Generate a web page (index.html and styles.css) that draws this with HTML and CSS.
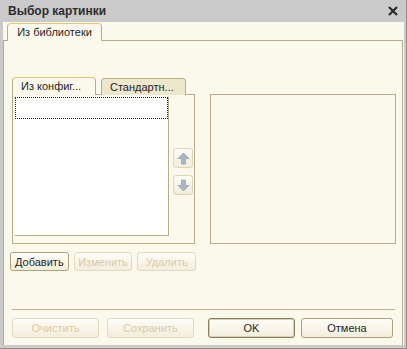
FILE: index.html
```html
<!DOCTYPE html>
<html lang="ru">
<head>
    <meta charset="UTF-8">
    <title>Выбор картинки</title>
    <link rel="stylesheet" href="styles.css">
</head>
<body>
    <div class="dialog">
        <div class="titlebar">
            <span class="title">Выбор картинки</span>
            <svg class="close" width="10" height="10" viewBox="0 0 10 10">
                <path d="M1 1 L9 9 M9 1 L1 9" stroke="#2b2b2b" stroke-width="2.2"/>
            </svg>
        </div>
        <div class="body">
            <div class="tabs">
                <div class="tab active outer-tab">Из библиотеки</div>
            </div>
            <div class="panel">
                <div class="main">
                    <div class="left-col">
                        <div class="tabs inner-tabs">
                            <div class="tab active">Из конфиг...</div>
                            <div class="tab">Стандартн...</div>
                        </div>
                        <div class="inner-panel">
                            <div class="list">
                                <div class="list-row"></div>
                            </div>
                            <div class="arrows">
                                <div class="arrow-btn">
                                    <svg width="13" height="13" viewBox="0 0 13 13">
                                        <path d="M6.5 1 L12 6.5 L8.5 6.5 L8.5 12 L4.5 12 L4.5 6.5 L1 6.5 Z" fill="#a9b8c8" stroke="#8e9fb1" stroke-width="0.7"/>
                                    </svg>
                                </div>
                                <div class="arrow-btn">
                                    <svg width="13" height="13" viewBox="0 0 13 13">
                                        <path d="M6.5 12 L12 6.5 L8.5 6.5 L8.5 1 L4.5 1 L4.5 6.5 L1 6.5 Z" fill="#a9b8c8" stroke="#8e9fb1" stroke-width="0.7"/>
                                    </svg>
                                </div>
                            </div>
                        </div>
                        <div class="btn-row">
                            <button class="btn">Добавить</button>
                            <button class="btn" disabled>Изменить</button>
                            <button class="btn" disabled>Удалить</button>
                        </div>
                    </div>
                    <div class="preview"></div>
                </div>
                <div class="separator"></div>
                <div class="footer">
                    <button class="btn wide" disabled>Очистить</button>
                    <button class="btn wide" disabled>Сохранить</button>
                    <button class="btn wide default">OK</button>
                    <button class="btn wide cancel">Отмена</button>
                </div>
            </div>
        </div>
    </div>
</body>
</html>
```

FILE: styles.css
```css
body {
    margin: 0;
    font-family: "Liberation Sans", Arial, sans-serif;
    font-size: 11px;
    color: #1e1e1e;
}

.dialog {
    width: 407px;
    height: 349px;
    display: flex;
    flex-direction: column;
    background-color: #cacaca;
    box-shadow: inset -1px 0 0 #8e8e8e, inset 0 -1px 0 #8e8e8e;
}

.titlebar {
    height: 22px;
    display: flex;
    align-items: center;
    justify-content: space-between;
    padding: 0 9px 0 8px;
}

.title {
    font-weight: bold;
    font-size: 12px;
    color: #2e2e2e;
}

.body {
    flex: 1;
    margin: 0 3px 4px 3px;
    padding-top: 1px;
    background-color: #fbf9eb;
    display: flex;
    flex-direction: column;
}

/* tab strip: active tab covers the panel's top border */
.tabs {
    display: flex;
    align-items: flex-start;
    padding-left: 4px;
    gap: 6px;
    margin-bottom: -1px;
}

.tab {
    height: 16px;
    line-height: 16px;
    padding: 0 8px;
    border: 1px solid #b7ae87;
    border-bottom: none;
    border-radius: 4px 4px 0 0;
    background-color: #ece7cd;
    margin-top: 1px;
}

.tab.active {
    height: 17px;
    margin-top: 0;
    background-color: #fbf9eb;
    border-top-color: #ecc66e;
    position: relative;
    z-index: 1;
}

.outer-tab {
    width: 93px;
    padding: 0;
    text-align: center;
}

.panel {
    flex: 1;
    margin-right: 1px;
    border: 1px solid #b7ae87;
    border-bottom: none;
    display: flex;
    flex-direction: column;
}

.main {
    display: flex;
    align-items: flex-start;
    padding: 36px 0 0 8px;
    gap: 14px;
}

.left-col {
    width: 184px;
}

.inner-tabs {
    padding-left: 0;
    gap: 5px;
}

.inner-tabs .tab {
    width: 67px;
}

.inner-tabs .tab.active {
    width: 66px;
}

.inner-panel {
    height: 139px;
    border: 1px solid #b7ae87;
    width: 179px;
    padding: 2px 0 7px 2px;
    display: flex;
    gap: 4px;
}

.list {
    width: 153px;
    border: 1px solid #b7ae87;
    border-top: none;
    border-left: none;
    background-color: #fff;
}

.list-row {
    height: 20px;
    border: 1px dotted #222;
}

.arrows {
    padding-top: 51px;
    display: flex;
    flex-direction: column;
    gap: 7px;
}

.arrow-btn {
    width: 18px;
    height: 18px;
    border: 1px solid #ddd6bb;
    border-radius: 3px;
    background: linear-gradient(#fdfcf5, #f1eddb);
    display: flex;
    align-items: center;
    justify-content: center;
}

.btn-row {
    display: flex;
    gap: 5px;
    margin: 8px 0 0 -2px;
}

.btn {
    height: 19px;
    padding: 0;
    width: 59px;
    font-family: "Liberation Sans", Arial, sans-serif;
    font-size: 11px;
    color: #1e1e1e;
    border: 1px solid #aba17b;
    border-radius: 3px;
    background: linear-gradient(#fefdf8, #f2eedc);
}

.btn:disabled {
    color: #dcc9a3;
    border-color: #e0d9bf;
}

.preview {
    margin-top: 17px;
    width: 184px;
    height: 148px;
    border: 1px solid #b7ae87;
}

.separator {
    margin: 38px 7px 0 8px;
    border-top: 1px solid #bdb48f;
}

.footer {
    display: flex;
    padding: 8px 0 0 8px;
}

.btn.wide {
    height: 20px;
    width: 87px;
    margin-right: 8px;
}

.btn.default {
    margin-left: 6px;
    margin-right: 6px;
    border-color: #877d58;
    box-shadow: inset 0 0 0 1px #d9d2b4;
}

.btn.cancel {
    width: 92px;
}
```
